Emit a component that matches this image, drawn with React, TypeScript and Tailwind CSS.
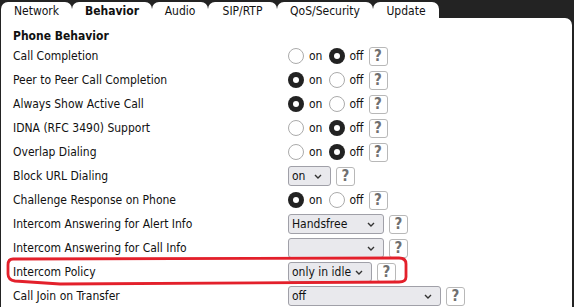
import React from 'react';

type Row =
  | { label: string; kind: 'radio'; on: boolean }
  | { label: string; kind: 'select'; value: string; width: string };

const rows: Row[] = [
  { label: 'Call Completion', kind: 'radio', on: false },
  { label: 'Peer to Peer Call Completion', kind: 'radio', on: true },
  { label: 'Always Show Active Call', kind: 'radio', on: true },
  { label: 'IDNA (RFC 3490) Support', kind: 'radio', on: false },
  { label: 'Overlap Dialing', kind: 'radio', on: false },
  { label: 'Block URL Dialing', kind: 'select', value: 'on', width: 'w-[43px]' },
  { label: 'Challenge Response on Phone', kind: 'radio', on: true },
  { label: 'Intercom Answering for Alert Info', kind: 'select', value: 'Handsfree', width: 'w-[96px]' },
  { label: 'Intercom Answering for Call Info', kind: 'select', value: '', width: 'w-[96px]' },
  { label: 'Intercom Policy', kind: 'select', value: 'only in idle', width: 'w-[84px]' },
  { label: 'Call Join on Transfer', kind: 'select', value: 'off', width: 'w-[153px]' },
];

const tabs = [
  { name: 'Network', w: 'w-[71px]' },
  { name: 'Behavior', w: 'w-[80px]', active: true },
  { name: 'Audio', w: 'w-[56px]' },
  { name: 'SIP/RTP', w: 'w-[69px]' },
  { name: 'QoS/Security', w: 'w-[96px]' },
  { name: 'Update', w: 'w-[66px]' },
];

function Radio({ checked }: { checked: boolean }) {
  return checked ? (
    <span className="w-4 h-4 rounded-full bg-[#222] flex items-center justify-center shrink-0">
      <span className="w-[6px] h-[6px] rounded-full bg-white" />
    </span>
  ) : (
    <span className="w-4 h-4 rounded-full bg-white border border-[#ababab] shrink-0" />
  );
}

function Help() {
  return (
    <span className="w-[19px] h-[19px] border border-[#b8b8b8] rounded-[3px] bg-white flex items-center justify-center text-[15px] font-bold text-[#707070] leading-none">
      ?
    </span>
  );
}

function Select({ value, width }: { value: string; width: string }) {
  return (
    <span className={`${width} h-5 bg-[#e9e9ed] border border-[#a0a0a8] rounded-[3px] flex items-center justify-between pl-[3px] pr-[8px]`}>
      <span className="leading-none">{value}</span>
      <svg width="8" height="5" viewBox="0 0 8 5" className="shrink-0">
        <path d="M1 1 L4 4 L7 1" fill="none" stroke="#333" strokeWidth="1.4" />
      </svg>
    </span>
  );
}

export default function App() {
  return (
    <div
      className="w-[574px] h-[307px] overflow-hidden bg-[#232323] pl-[1px] pr-[2px] pt-[2px] text-[12px] text-[#111]"
      style={{ fontFamily: '"DejaVu Sans Condensed", "DejaVu Sans", Verdana, sans-serif', fontStretch: 'condensed' }}
    >
      {/* tabs */}
      <div className="flex h-4">
        {tabs.map((t) => (
          <div
            key={t.name}
            className={`${t.w} h-4 bg-white rounded-t-[7px] flex items-center justify-center pt-[2px] ${t.active ? 'font-bold' : ''}`}
          >
            {t.name}
          </div>
        ))}
      </div>

      {/* panel */}
      <div className="relative bg-white rounded-tr-[7px] h-[300px] pl-[12px] pt-[10px]">
        <div className="h-4 flex items-center font-bold">Phone Behavior</div>
        {rows.map((r) => (
          <div key={r.label} className="h-6 grid grid-cols-[275px_1fr] items-center">
            <span>{r.label}</span>
            {r.kind === 'radio' ? (
              <div className="flex items-center">
                <Radio checked={r.on} />
                <span className="ml-[5px] mr-[7px]">on</span>
                <Radio checked={!r.on} />
                <span className="ml-[4px] mr-[5px]">off</span>
                <Help />
              </div>
            ) : (
              <div className="flex items-center gap-[5px]">
                <Select value={r.value} width={r.width} />
                <Help />
              </div>
            )}
          </div>
        ))}

        {/* red highlight around Intercom Policy */}
        <svg className="absolute left-0 top-0 pointer-events-none" width="572" height="290" viewBox="1 18 572 290">
          <path
            d="M13 259 L399 258 Q406 258 406 264 L406 277 Q406 282 399 282 L60 284 L15 281 Q8 280 8 274 L8 265 Q8 259 13 259 Z"
            fill="none"
            stroke="#e3202b"
            strokeWidth="2.8"
          />
        </svg>
      </div>
    </div>
  );
}
